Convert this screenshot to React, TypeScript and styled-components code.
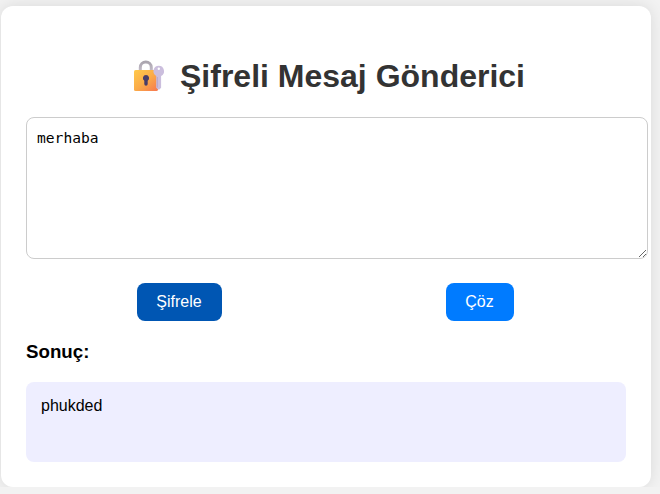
import React, { useState } from "react";
import styled, { createGlobalStyle } from "styled-components";

const GlobalStyle = createGlobalStyle`
  body {
    margin: 0;
    background: #f2f2f2;
    font-family: "Liberation Sans", Arial, sans-serif;
    overflow: hidden;
  }
`;

const Card = styled.main`
  box-sizing: border-box;
  width: 650px;
  height: 481px;
  margin: 6px 0 0 1px;
  padding: 25px;
  background: #fff;
  border-radius: 12px;
  box-shadow: 0 0 15px rgba(0, 0, 0, 0.1);
`;

const Title = styled.h1`
  display: flex;
  align-items: center;
  justify-content: center;
  height: 43px;
  margin: 24px 0 19px;
  color: #333;
  font-size: 32px;
  line-height: 37px;
  white-space: pre;
`;

const LockIcon = styled.svg`
  width: 34px;
  height: 34px;
  margin: 0 13px 2px 6px;
`;

const Message = styled.textarea`
  display: block;
  width: 600px;
  height: 120px;
  margin: 0 0 24px;
  padding: 10px;
  border: 1px solid #ccc;
  border-radius: 8px;
  outline: none;
  resize: both;
  background: #fff;
  color: #000;
  font: 14.62px/20px "DejaVu Sans Mono", monospace;
`;

const Actions = styled.div`
  display: flex;
  justify-content: space-around;
  margin-right: 1px;
  margin-left: -1px;
`;

const ActionButton = styled.button<{ $active?: boolean; $width: number }>`
  width: ${({ $width }) => $width}px;
  height: 38px;
  padding: 0;
  border: 0;
  border-radius: 8px;
  background: ${({ $active }) => ($active ? "#0056b3" : "#007bff")};
  color: #fff;
  font: 16px/18px "Liberation Sans", Arial, sans-serif;
  cursor: pointer;

  & + & {
    margin-left: 1px;
  }
`;

const ResultTitle = styled.h3`
  margin: 20px 0;
  color: #000;
  font-size: 18.72px;
  line-height: 21px;
`;

const Result = styled.div`
  box-sizing: border-box;
  height: 80px;
  padding: 15px;
  border-radius: 8px;
  background: #eef;
  color: #000;
  font-size: 16px;
  line-height: 18px;
`;

function LockWithKey() {
  return (
    <LockIcon viewBox="0 0 34 34" aria-hidden="true">
      <defs>
        <linearGradient id="lockBody" x1="0" y1="0" x2="1" y2="1">
          <stop offset="0" stopColor="#ffc94b" />
          <stop offset=".5" stopColor="#fbac48" />
          <stop offset="1" stopColor="#f77751" />
        </linearGradient>
        <linearGradient id="shackle" x1="0" y1="0" x2="0" y2="1">
          <stop offset="0" stopColor="#aaa5ae" />
          <stop offset="1" stopColor="#c7bfcb" />
        </linearGradient>
      </defs>
      <path d="M7.3 13V8.4a5.5 5.5 0 0 1 11 0V13" fill="none" stroke="url(#shackle)" strokeWidth="3" />
      <rect x="1" y="11" width="24" height="21" rx="1.6" fill="url(#lockBody)" />
      <path d="M13 16a3.1 3.1 0 0 0-1.7 5.7V25a1.7 1.7 0 0 0 3.4 0v-3.3A3.1 3.1 0 0 0 13 16Z" fill="#493d69" />
      <path
        fill="#cbbedd"
        fillRule="evenodd"
        d="M25.8 6.8a5.4 5.4 0 0 0-2.6 10.1v11.8l1.8 1.8h1.4l1.7-1.7v-11.8A5.4 5.4 0 0 0 25.8 6.8Zm0 1.7a1.2 1.2 0 1 1 0 2.4 1.2 1.2 0 0 1 0-2.4Z"
      />
      <path d="M24.4 18v10.5" stroke="#b3a2c9" strokeWidth=".8" />
    </LockIcon>
  );
}

const shift = (text: string, amount: number) =>
  text.replace(/[a-z]/g, (letter) =>
    String.fromCharCode(((letter.charCodeAt(0) - 97 + amount + 26) % 26) + 97),
  );

export default function App() {
  const [message, setMessage] = useState("merhaba");
  const [result, setResult] = useState("phukded");

  return (
    <>
      <GlobalStyle />
      <Card>
        <Title><LockWithKey />Şifreli Mesaj Gönderici</Title>
        <Message
          value={message}
          spellCheck={false}
          onChange={(event) => setMessage(event.target.value)}
        />
        <Actions>
          <ActionButton $active $width={85} onClick={() => setResult(shift(message, 3))}>Şifrele</ActionButton>
          <ActionButton $width={68} onClick={() => setResult(shift(message, -3))}>Çöz</ActionButton>
        </Actions>
        <ResultTitle>Sonuç:</ResultTitle>
        <Result>{result}</Result>
      </Card>
    </>
  );
}
